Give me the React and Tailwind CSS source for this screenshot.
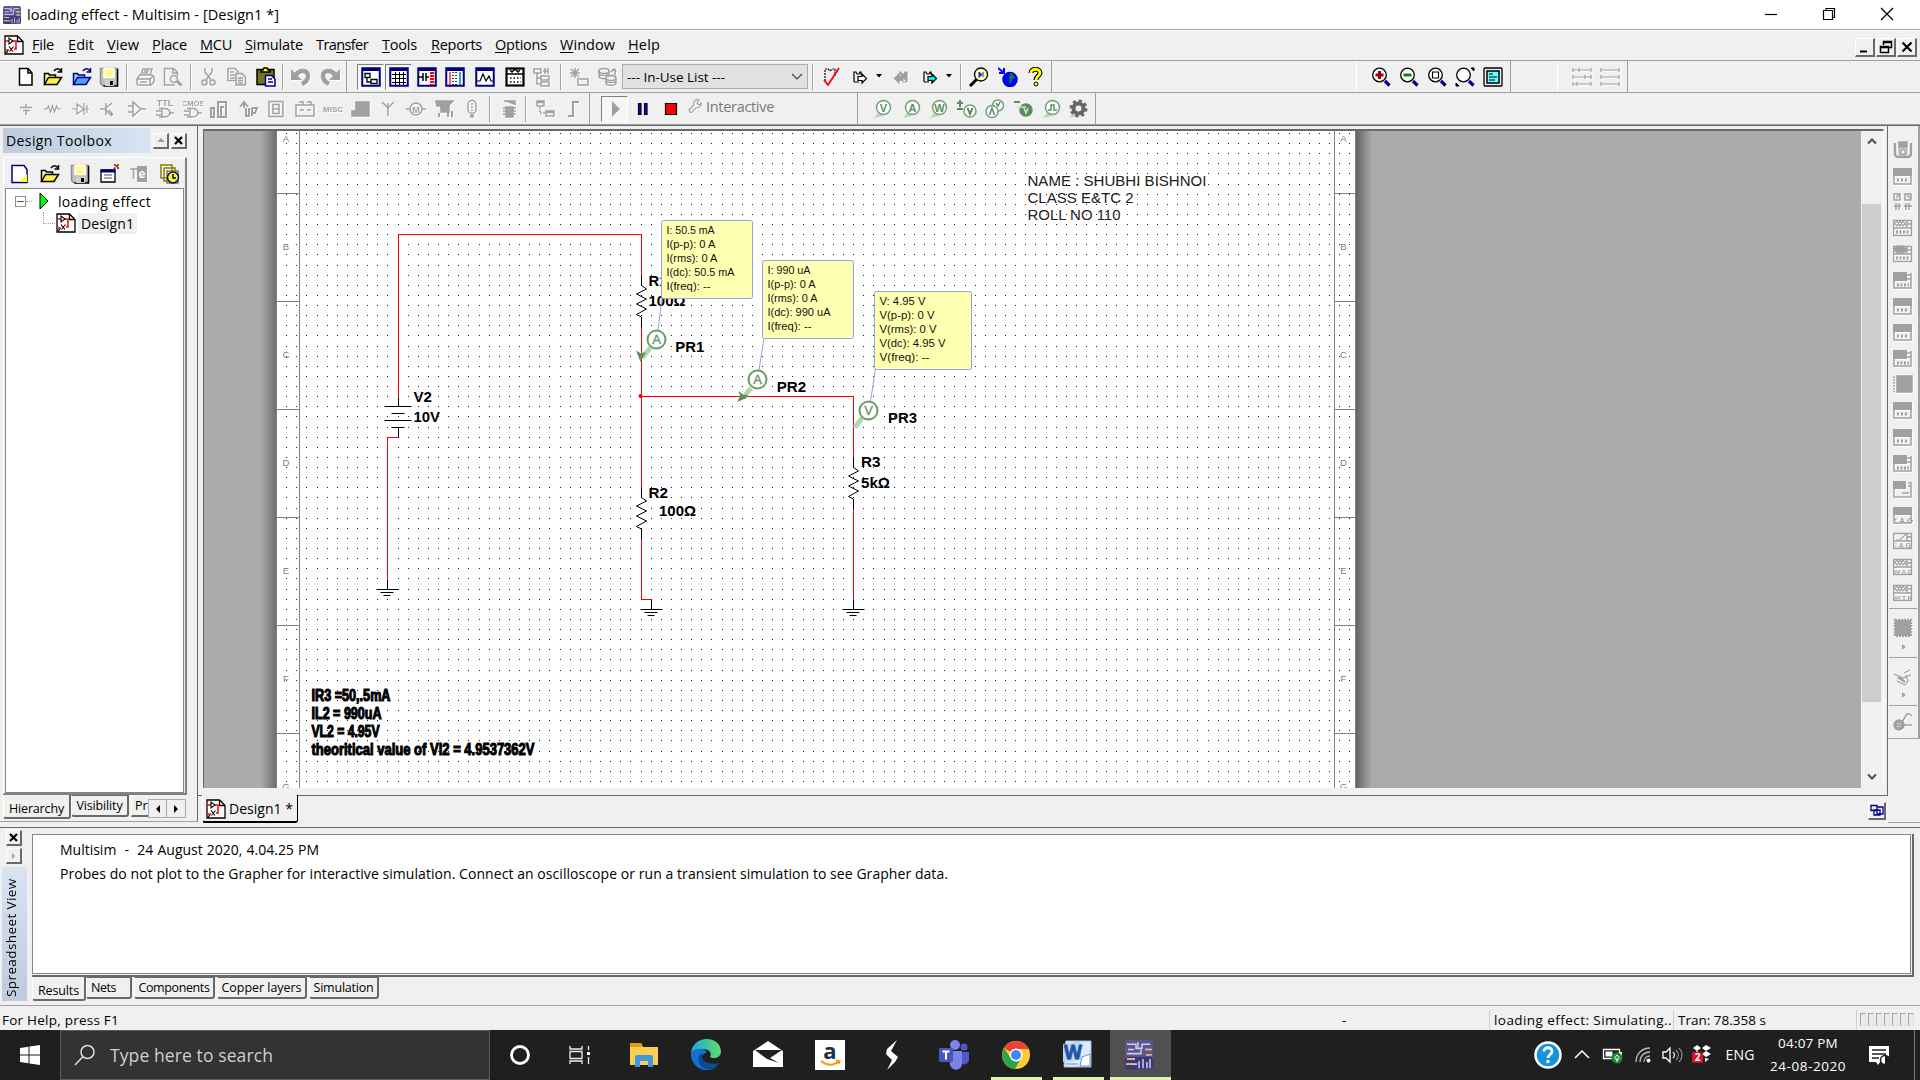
import React, { useLayoutEffect, useRef, useState } from "react";

const UI = "font-['Open_Sans','Noto_Sans',sans-serif]";

/* Single-line label whose tracking is fitted to a given width. */
function Label({ w, className = "", children }) {
  const ref = useRef(null);
  const [ls, setLs] = useState(0);
  useLayoutEffect(() => {
    const el = ref.current;
    const n = el.textContent.length;
    if (w && n > 1) setLs((w - el.getBoundingClientRect().width) / n);
  }, [w]);
  return (
    <span ref={ref} className={"inline-block whitespace-pre " + className} style={{ letterSpacing: ls }}>
      {children}
    </span>
  );
}

/* Flex row whose items are centred on given x values. */
function Strip({ start = 0, items, className = "" }) {
  let end = start;
  return (
    <div className={"flex items-center " + className}>
      {items.map(([c, w, el], i) => {
        const ml = c - w / 2 - end;
        end = c + w / 2;
        return (
          <div key={i} className="flex shrink-0 justify-center" style={{ marginLeft: ml, width: w }}>
            {el}
          </div>
        );
      })}
    </div>
  );
}

const G = "#a0a0a0";
function I({ children, w = 20, h = 20, off }) {
  return (
    <svg
      width={w}
      height={h}
      viewBox={`0 0 ${w} ${h}`}
      fill="none"
      stroke={off ? G : "#000"}
      strokeWidth="1.5"
      className={off ? "block shrink-0 drop-shadow-[1px_1px_0_#fff]" : "block shrink-0"}
    >
      {children}
    </svg>
  );
}
const Sep = () => (
  <div className="flex h-[26px] w-[2px]">
    <div className="w-px bg-[#a0a0a0]" />
    <div className="w-px bg-white" />
  </div>
);
const Pressed = ({ children }) => (
  <div className="flex h-[26px] w-[27px] items-center justify-center border border-white border-t-[#808080] border-l-[#808080] bg-[#f6f6f6]">
    {children}
  </div>
);

/* ---------- icons ---------- */
const NewIc = () => (
  <I>
    <path d="M3.500 1.500h8.500l4 4.500v12h-12.500z" fill="#fff" />
    <path d="M12 1.500v4.500h4" />
  </I>
);
const OpenIc = ({ blue }) => (
  <I>
    <path d="M1.500 17.500V6.500h4l1 1.500h6v3" fill={blue ? "#9cf" : "#fff799"} stroke={blue ? "#000080" : "#000"} />
    <path d="M1.500 17.500l4-7h13l-4.500 7z" fill={blue ? "#4d9eff" : "#fff04a"} stroke={blue ? "#000080" : "#000"} />
    <path d="M11 4c2-3 5-3 7 0M18.500 1v4h-4" stroke={blue ? "#000080" : "#000"} />
  </I>
);
const SaveIc = () => (
  <I>
    <path d="M1.500 1.500h17v17h-15l-2-2z" fill="#c0c0c0" stroke="#909090" />
    <path d="M18.500 2v17h-14" />
    <rect x="5" y="1.500" width="10" height="9" fill="#fff88a" stroke="#fff" />
    <rect x="6" y="13" width="9" height="6" fill="#d0d0d0" stroke="none" />
    <rect x="11" y="14" width="3" height="4" fill="#000" stroke="none" />
  </I>
);
const PrintIc = () => (
  <I off>
    <path d="M6 8l2-6h9l-2 6M2 12l3-4h12l2 2v5l-3 3H3l-1-1zM2 12h13l3-3M15 12v6M5 15h7M9 4h5M8 6h5" />
  </I>
);
const PreviewIc = () => (
  <I off>
    <path d="M12 18H1.500V1.500h9l4 4V9M10 2v4h4M14 14l5 5" />
    <circle cx="11" cy="12" r="3.500" />
    <path d="M14 14l4 4" strokeWidth="3" />
  </I>
);
const CutIc = () => (
  <I off>
    <path d="M6 1v4l6 8M13 1v4l-6 8" />
    <circle cx="5.500" cy="15.500" r="2.500" />
    <circle cx="13.500" cy="15.500" r="2.500" />
  </I>
);
const CopyIc = () => (
  <I off>
    <path d="M1 1.500h7l3 3v9H1zM3 5h4M3 8h5M3 11h5" />
    <path d="M9 6.500h6l3.500 3.500v8H9zM11 11h5M11 13.500h5M11 16h5" fill="#f0f0f0" />
  </I>
);
const PasteIc = () => (
  <I>
    <rect x="1" y="2.500" width="17" height="15" fill="#77751c" />
    <path d="M5 5V3h2c0-3 5-3 5 0h2v2z" fill="#ff0" />
    <path d="M9.500 8.500h6l3.500 3.500v7H9.500zM12 12h4M12 15h5" fill="#fff" stroke="#000080" />
  </I>
);
const UndoIc = ({ flip }) => (
  <I off>
    <g transform={flip ? "translate(20 0) scale(-1 1)" : undefined}>
      <path d="M5 8c3-5 12-6 12 1 0 4-2 6-6 8" strokeWidth="4.500" />
      <path d="M0 2v11h11z" fill={G} stroke="none" />
    </g>
  </I>
);
const Win = ({ children }) => (
  <I>
    <rect x="1.250" y="1.250" width="17.500" height="17.500" fill="#fff" stroke="#000080" strokeWidth="2" />
    <rect x="1" y="1" width="18" height="3" fill="#000080" stroke="none" />
    {children}
  </I>
);
const HierIc = () => (
  <I off>
    <path d="M1 2h7v4H1zM8 9h8v4H8zM8 15h8v4H8zM4 6v11h4M4 11h4M10 4h5M12 1v6M15 1v6" />
  </I>
);
const CalcIc = () => (
  <I>
    <rect x="1.500" y="1.500" width="17" height="17" fill="#fff" strokeWidth="2.200" />
    <path d="M2 7h16M5 3l2 2 3-3 3 3 2-2" />
    <path d="M5 11h11M5 15h11" strokeDasharray="1.500 2" />
  </I>
);
const StarIc = () => (
  <I off>
    <path d="M6 1v10M1 6h10M2 2l8 8M10 2l-8 8M9 12h10v6H9z" />
  </I>
);
const DbIc = () => (
  <I off>
    <ellipse cx="6" cy="4" rx="5" ry="2.500" />
    <path d="M1 4v5c0 3 6 3 8 2M1 7c0 2 8 2 10 0V4M13 5l3-3 2 3M17 2v6" />
    <ellipse cx="13" cy="11" rx="5" ry="2.500" fill="#f0f0f0" />
    <path d="M8 11v5c0 3 10 3 10 0v-5M8 14c0 2 10 2 10 0" />
  </I>
);
const ErcIc = () => (
  <I>
    <path d="M4 14V2h3l2 2 2-2h3v7" strokeDasharray="2 1" strokeWidth="1.200" />
    <path d="M3 13l4 5L18 1" stroke="#f00" strokeWidth="1.800" />
  </I>
);
const XferIc = ({ back, cyan }) => (
  <I w={16} h={16} off={back}>
    <g transform={back ? "translate(16 0) scale(-1 1)" : undefined} strokeWidth="1.200">
      <path d="M2 13V3h2l1 2h2l1-2h1v3M2 13h5" fill={back ? G : "none"} />
      <path d="M6 7.500h4V5l4.500 4.500L10 14v-2.500H6z" fill={back ? G : cyan ? "#0ee" : "#fff"} />
    </g>
  </I>
);
const Tri = () => <I w={7} h={5}><path d="M0 0h6L3 3.500z" fill="#000" stroke="none" /></I>;
const FindIc = () => (
  <I>
    <path d="M8 12l-7 7" strokeWidth="3" />
    <circle cx="12" cy="7.500" r="6.500" fill="#ffffb0" strokeWidth="1.300" />
    <path d="M10 5l3 2.500-3 3z M14 5v5" fill="#22c" stroke="#22c" strokeWidth="1" />
  </I>
);
const GlobeIc = () => (
  <I>
    <circle cx="12" cy="12.500" r="7" fill="#00f" stroke="#00c" />
    <path d="M12 6c4 0 3 3 5 4-1 3-4 1-3 4l-2 3c-2-3 1-4-1-6z" fill="#087a4a" stroke="none" />
    <path d="M0 1l6 5M6 1v5H1" stroke="#00f" strokeWidth="2" />
  </I>
);
const HelpIc = () => (
  <I w={16}>
    <path d="M4 6c0-5 9-5 9 0 0 3-4 3-4 7" strokeWidth="5" />
    <path d="M4 6c0-5 9-5 9 0 0 3-4 3-4 7" stroke="#ff0" strokeWidth="2.800" />
    <circle cx="9" cy="17" r="2" fill="#ff0" strokeWidth="1" />
  </I>
);
const DesIc = () => (
  <I>
    <path d="M1 1h12.500L19 6.500V19H1z" fill="#fff" strokeWidth="1.300" />
    <path d="M13.500 1v5.500H19" strokeWidth="1.300" />
    <path d="M1 6h4M8 6h4v8h-2M1 15h4" stroke="#f00" strokeWidth="1.500" />
    <path d="M5 3v6l4-3zM5 11.500l4 5M9.500 11.500l-4 5M2 18l2-2" strokeWidth="1.100" />
  </I>
);
const Mag = ({ children }) => (
  <I>
    <circle cx="8.500" cy="8" r="6.800" fill="#fff" strokeWidth="1.300" />
    <path d="M14 14l4.500 4.500" stroke="#00009c" strokeWidth="3.200" />
    {children}
  </I>
);
const Txt = ({ t, y = 8, s = 8, x = 10 }) => (
  <text x={x} y={y} fontSize={s} textAnchor="middle" fill={G} stroke="none" fontWeight="bold" fontFamily="Liberation Sans, sans-serif">
    {t}
  </text>
);

const parts = [
  [26, <I off><path d="M4 8.500h12M7 11.500h7M10 5v3M10 12v4" /></I>],
  [53, <I off><path d="M1 10h3l1.500-3 2 6 2-6 2 6 2-6 1.500 3H18" strokeWidth="1.200" /></I>],
  [81, <I off><path d="M1 10h5M6 5v10l7-5zM13 4v12M13 10h5M16 6v8" strokeWidth="1.200" /></I>],
  [108, <I off><path d="M2 10h6M8 4v12M8 9l6-5M8 11l6 6M11 11l4 5" /></I>],
  [137, <I off><path d="M1 7h5M1 13h5M6 3v14l8-7zM14 10h5" /></I>],
  [165, <I off><Txt t="TTL" y={7} s={9} /><path d="M4 9.500h5c8 0 8 8.500 0 8.500H4M7 10v8M14 14h5M1 12h5M1 16h5" /></I>],
  [193, <I off><Txt t="CMOS" y={7} s={7.5} /><path d="M4 9.500h5c8 0 8 8.500 0 8.500H4M7 10v8M14 14h5M1 12h5M1 16h5" /></I>],
  [220, <I off><path d="M4 18V9H1v9zM8 18V3h8v15zM11 18V8h3" strokeWidth="2" /></I>],
  [249, <I off><path d="M1 8l4-5 4 5M5 3v6M7 9v8h3V9M13 9v8M13 9h5l-2 5h-3" strokeWidth="2" /></I>],
  [276, <I off><path d="M3 2.500h14v15H3zM7 5.500h6v9H7zM7 10h6" /></I>],
  [305, <I off><path d="M1 6h18v11H1zM4 3h4v3M12 3h4v3M5 11h4M12 11h4" /></I>],
  [333, <I off><Txt t="MISC" y={12.500} s={8} /></I>],
  [361, <I off><path d="M5 3h13v11H5zM1 12h17v5H1z" fill={G} /></I>],
  [388, <I off><path d="M4 3l6 6 6-6M10 4v13" /></I>],
  [416, <I off><path d="M0 10h4M16 10h4" /><circle cx="10" cy="10" r="6" /><Txt t="M" y={13.500} s={9} /></I>],
  [445, <I off><path d="M1 2h17l-4 4v7H6V7H2z" fill={G} /><path d="M4 18v-4M13 18v-7M17 18v-6" strokeWidth="2" /></I>],
  [472, <I off><rect x="6" y="1.500" width="8" height="13" rx="4" /><path d="M10 4v9" strokeDasharray="2 1" /><path d="M8 17h4" strokeWidth="3" /></I>],
  [490, <Sep />, 2],
  [509, <I off><path d="M5 2h11v4M7 8h7v10H7z" fill={G} /><path d="M4 9h13M4 12h13M4 15h13" /></I>],
  [526, <Sep />, 2],
  [545, <I off><path d="M2 2h7v5H2zM2 3.500h7M11 12h8v5h-8zM11 13.500h8" /><path d="M5 8v6h5" strokeDasharray="2 1" /></I>],
  [573, <I off><path d="M5 17h5V3h6" strokeWidth="2" /></I>],
].map(([c, e, w]) => [c, w || 20, e]);

const Probe = ({ t }) => (
  <I>
    <path d="M1 19l5-6 4 4z" fill="#b5d8b0" stroke="none" />
    <circle cx="10.500" cy="8.500" r="7" fill="#fff" stroke="#74a077" />
    <text x="10.500" y="12.500" fontSize="11" textAnchor="middle" fill="#5b8c60" stroke="none" fontWeight="bold" fontFamily="Liberation Sans, sans-serif">
      {t}
    </text>
  </I>
);

/* ---------- instrument icons ---------- */
const instKinds = "abcdefghijklmnopqr".split("");
function Instrument({ k }) {
  const full = "bghklo".includes(k);
  const wave = "depqr".includes(k);
  return (
    <I off w={20} h={18}>
      {k === "a" && <><path d="M2 2v12l2 2h12l2-2V2" strokeWidth="2.500" /><path d="M6 1h8v5H6z" fill={G} /><path d="M6 7h8v7H6z" strokeWidth="1" /><circle cx="10" cy="11" r="2.500" /></>}
      {k === "c" && <path d="M1 1h6v6H1zM12 1h6v6h-6zM3 5l3-3M14 2l3 3M1 13h7M11 13h8M3 10v7M6 10v7M13 10v7M16 10v7" />}
      {full && <><path d="M0 1h19v8H0z" fill={G} stroke="none" /><path d="M1 1v16h17V9" /></>}
      {full && k !== "o" && <path d="M4 13h12" strokeWidth="3" strokeDasharray="2 2" />}
      {wave && <><path d="M.5 1.500h18v15H.5zM1 9h18M14 1v8M14 5h5" /><path d={k === "p" ? "M3 8h4l6-6" : "M1 6l3-4 3 5 3-5 3 5M1 3l3 4 3-5 3 5 3-4"} strokeWidth={k === "e" ? 2.8 : 1.2} /></>}
      {"de".includes(k) && <path d="M3 13h13" strokeDasharray="2 1.500" strokeWidth="3" />}
      {k === "o" && <Txt t="† A G" y={16.5} s={8} />}
      {k === "p" && <Txt t="⁝ A G" y={16} s={7} />}
      {k === "q" && <Txt t="## A G" y={15.5} s={6} />}
      {k === "r" && <Txt t="## T K" y={15.5} s={6} />}
      {"fim".includes(k) && <><path d="M0 1h14v9H0z" fill={G} stroke="none" /><path d="M1 1v16h17V2M14 4h4M14 8h4" /><path d="M4 14h12" strokeWidth="3" strokeDasharray="2 1.500" /></>}
      {k === "j" && <><path d="M4 1h15v16H4z" fill={G} /><path d="M1 1v16" strokeDasharray="2 1" /></>}
      {k === "n" && <><path d="M0 1h13v8H0z" fill={G} stroke="none" /><path d="M1 9v8h17V2M15 3h3M15 6h3M9 13h7" /></>}
    </I>
  );
}

/* ---------- schematic ---------- */
const BF = "Liberation Sans, Arial, sans-serif";
const Res = ({ x, y }) => (
  <path d={`M${x} ${y - 10}v10l5 3.500-10 5 10 5-10 5 10 5-10 5.500 5 2.500v10`} stroke="#000" fill="none" />
);
const Gnd = ({ x, y }) => <path d={`M${x} ${y - 10}v10M${x - 11} ${y}h22M${x - 7} ${y + 3}h13M${x - 4} ${y + 6}h7`} stroke="#000" fill="none" />;
const B = ({ x, y, w, children }) => (
  <text x={x} y={y} fontSize="15" fontWeight="bold" textLength={w} lengthAdjust="spacingAndGlyphs" fontFamily={BF}>
    {children}
  </text>
);
const Head = ({ x, y, t }) => (
  <g>
    <circle cx={x} cy={y} r="9" fill="#fff" stroke="#6b9a6e" strokeWidth="2" />
    <text x={x} y={y + 4.5} fontSize="13" textAnchor="middle" fill="#6b9a6e" stroke="#6b9a6e" strokeWidth=".4" fontFamily={BF}>
      {t}
    </text>
  </g>
);
const Note = ({ x, y, w, lines }) => (
  <g>
    <rect x={x} y={y} width={w} height="78" rx="2" fill="#ffffb2" stroke="#8fa5e0" />
    {lines.map(([t, l], i) => (
      <text key={i} x={x + 5} y={y + 13.5 + i * 14} fontSize="11.500" textLength={l} lengthAdjust="spacingAndGlyphs" fontFamily={BF} fill="#111">
        {t}
      </text>
    ))}
  </g>
);

function Schematic() {
  const L = ["A", "B", "C", "D", "E", "F", "G"];
  const steps = [0, 10, 20, 30, 40, 50, 60, 70];
  return (
    <svg width="1657" height="657" viewBox="204 131 1657 657" className="block shrink-0">
      <defs>
        <pattern id="dots" x="317" y="184" width="81" height="81" patternUnits="userSpaceOnUse">
          {steps.map((a) => steps.map((b) => <rect key={a + "-" + b} x={a} y={b} width="1" height="1" fill="#202020" />))}
        </pattern>
        <linearGradient id="sl"><stop offset="0" stopColor="#ababab" /><stop offset="1" stopColor="#6a6a6a" /></linearGradient>
        <linearGradient id="sr"><stop offset="0" stopColor="#606060" /><stop offset="1" stopColor="#ababab" /></linearGradient>
      </defs>
      <rect x="204" y="131" width="1657" height="657" fill="#ababab" />
      <rect x="261" y="131" width="16" height="657" fill="url(#sl)" />
      <rect x="1355" y="131" width="17" height="657" fill="url(#sr)" />
      <rect x="277" y="131" width="1079" height="657" fill="#fff" />
      <rect x="280" y="131" width="1072" height="657" fill="url(#dots)" />
      <g fill="#808080">
        <rect x="276" y="131" width="1" height="657" />
        <rect x="299" y="131" width="1" height="657" />
        <rect x="1334" y="131" width="1" height="657" />
        <rect x="1355" y="131" width="1" height="657" />
        {[193, 301, 409, 517, 625, 733].map((y) => (
          <g key={y}>
            <rect x="277" y={y} width="22" height="1" />
            <rect x="1335" y={y} width="20" height="1" />
          </g>
        ))}
      </g>
      <g fontFamily={BF} fontSize="9.500" fill="#808080" textAnchor="middle">
        {L.map((c, i) => (
          <g key={c}>
            <text x="286" y={142 + i * 108}>{c}</text>
            <text x="1343.500" y={142 + i * 108}>{c}</text>
          </g>
        ))}
      </g>
      <g transform="translate(.5 .5)">
        <g stroke="#f00" fill="none">
          <path d="M398 397V234H641V275M398 437H387V578M641 325V487M641 396H853V457M641 538V599H651M853 507V600" />
          <circle cx="640" cy="395.500" r="2" fill="#f00" stroke="none" />
        </g>
        <path d="M398 397v9M384 406h27M391 413h13M384 420h27M391 427h13M398 427v10" stroke="#000" fill="none" />
        <Res x={641} y={285} />
        <Res x={641} y={497} />
        <Res x={853} y={467} />
        <Gnd x={387} y={589} />
        <Gnd x={651} y={609} />
        <Gnd x={853} y={609} />
      </g>
      <B x={413.5} y={402} w={18.5}>V2</B>
      <B x={413.5} y={422} w={26.5}>10V</B>
      <B x={648.5} y={285.500} w={19}>R1</B>
      <B x={648.5} y={305.500} w={37}>100Ω</B>
      <B x={648.5} y={498} w={19.5}>R2</B>
      <B x={659} y={516} w={37}>100Ω</B>
      <B x={861} y={467} w={19.5}>R3</B>
      <B x={861} y={487.5} w={29}>5kΩ</B>
      <B x={675.2} y={351.7} w={29}>PR1</B>
      <B x={776.7} y={391.7} w={29.5}>PR2</B>
      <B x={888} y={422.5} w={29}>PR3</B>
      <path d="M662 298l-4 32M764 338l-5 32M875.500 369l-5 32" fill="none" stroke="#8fa5e0" />
      <path d="M650.500 347.500L642 358M751 388l-8 10M862 418l-7 9.500" stroke="#b2d9ae" strokeWidth="5" fill="none" />
      <path d="M636 350.500l5 3 5-1.500-5.500 10zM738.500 391l5 4 4-.5-1 3.500-9.500 4 3-6z" fill="#5c8f62" />
      <Head x={656.500} y={339.500} t="A" />
      <Head x={757.500} y={379.500} t="A" />
      <Head x={868.500} y={410.500} t="V" />
      <Note x={661.500} y={220.500} w={91} lines={[["I: 50.5 mA", 48], ["I(p-p): 0 A", 49], ["I(rms): 0 A", 51], ["I(dc): 50.5 mA", 68], ["I(freq): --", 44]]} />
      <Note x={762.500} y={260.500} w={91} lines={[["I: 990 uA", 43], ["I(p-p): 0 A", 48], ["I(rms): 0 A", 50], ["I(dc): 990 uA", 63], ["I(freq): --", 44]]} />
      <Note x={874.500} y={291.500} w={97} lines={[["V: 4.95 V", 46], ["V(p-p): 0 V", 55], ["V(rms): 0 V", 57], ["V(dc): 4.95 V", 66], ["V(freq): --", 50]]} />
      <g fontFamily={BF} fontSize="15.500" fill="#222">
        <text x="1027.500" y="186" textLength="179" lengthAdjust="spacingAndGlyphs">NAME : SHUBHI BISHNOI</text>
        <text x="1027.500" y="203" textLength="106" lengthAdjust="spacingAndGlyphs">CLASS E&amp;TC 2</text>
        <text x="1027.500" y="220" textLength="93" lengthAdjust="spacingAndGlyphs">ROLL NO 110</text>
      </g>
      <g fontFamily="Liberation Sans Narrow, Liberation Sans, sans-serif" fontSize="16" fontWeight="bold" stroke="#000" strokeWidth="1.100">
        <text x="311.500" y="701" textLength="79" lengthAdjust="spacingAndGlyphs">IR3 =50,.5mA</text>
        <text x="311.500" y="719" textLength="70" lengthAdjust="spacingAndGlyphs">IL2 = 990uA</text>
        <text x="311.500" y="736.500" textLength="68" lengthAdjust="spacingAndGlyphs">VL2 = 4.95V</text>
        <text x="311.500" y="754.500" textLength="223" lengthAdjust="spacingAndGlyphs">theoritical value of VI2 = 4.9537362V</text>
      </g>
    </svg>
  );
}

/* ---------- chrome ---------- */
const Btn3 = ({ children, className = "" }) => (
  <div className={"flex shrink-0 items-center justify-center border-t border-l border-r-2 border-b-2 border-t-white border-l-white border-r-[#696969] border-b-[#696969] bg-[#f0f0f0] " + className}>
    {children}
  </div>
);

const Chip = ({ s, big }) => (
  <svg width={s} height={big ? s * 1.05 : s} viewBox="0 0 28 28" preserveAspectRatio="none" className="block shrink-0">
    <rect width="28" height="28" rx="3" fill="#5b568f" />
    <rect y="16" width="28" height="12" rx="3" fill="#3d3875" />
    <path d="M2 4h9v4h6V4h8M2 13h14V9M3 9h6M13 2v5M20 9h6M21 14h5M2 18h8M2 23h10M14 27v-7M18 27v-9M22 27v-6M25 27v-9" stroke="#d0cdea" strokeWidth="1.500" fill="none" />
    <path d="M20 9h7M2 18h7M21 14h6M1 23h8" stroke="#e8b36c" strokeWidth="1.500" />
  </svg>
);

function TitleBar() {
  return (
    <div className="flex h-[29px] items-center bg-white pl-[3px]">
      <Chip s={18} />
      <Label w={252} className="ml-[6px] text-[14.500px]">loading effect - Multisim - [Design1 *]</Label>
      <div className="mb-px ml-auto flex items-center gap-[44px] pr-[26px]">
        <I w={14} h={14}><path d="M1 7.500h12" strokeWidth="1.200" /></I>
        <I w={14} h={14}><path d="M1.500 3.500h9v9h-9zM4 3.500v-2h8.500v9h-2" strokeWidth="1.200" /></I>
        <I w={14} h={14}><path d="M1 1l12 12M13 1L1 13" strokeWidth="1.200" /></I>
      </div>
    </div>
  );
}

const menus = [
  ["", "F", "ile", 32, 22], ["", "E", "dit", 68, 26], ["", "V", "iew", 107, 32], ["", "P", "lace", 152, 35], ["", "M", "CU", 200, 32], ["", "S", "imulate", 245, 58],
  ["Tra", "n", "sfer", 316, 52], ["", "T", "ools", 382, 35], ["", "R", "eports", 431, 51], ["", "O", "ptions", 495, 52], ["", "W", "indow", 560, 55], ["", "H", "elp", 628, 32],
];

function MenuBar() {
  return (
    <div className="flex h-[31px] items-center border-t border-[#a0a0a0] pr-[3px] pl-[3px] shadow-[inset_0_1px_0_#fff]">
      <Strip
        start={3}
        items={[[14, 20, <DesIc />], ...menus.map(([a, u, b, x, w]) => [x + w / 2, w, <Label w={w} className="shrink-0 text-[14.500px] leading-5">{a}<span className="underline decoration-1 underline-offset-2">{u}</span>{b}</Label>])]}
      />
      <div className="mt-[5px] ml-auto flex gap-[1px]">
        <Btn3 className="h-[19px] w-5"><I w={12} h={12}><path d="M1 10.500h7" strokeWidth="2" /></I></Btn3>
        <Btn3 className="h-[19px] w-5"><I w={14} h={14}><path d="M4.500 5V1.500h8v6H10M4.500 2.500h8M1.500 6.500h8v6h-8zM1.500 7.500h8" /></I></Btn3>
        <Btn3 className="h-[19px] w-5"><I w={12} h={12}><path d="M1.500 1.500l9 9M10.500 1.500l-9 9" strokeWidth="2.200" /></I></Btn3>
      </div>
    </div>
  );
}

function Toolbar1() {
  const items = [
    [25.5, 20, <NewIc />], [53, 20, <OpenIc />], [82, 20, <OpenIc blue />], [109, 20, <SaveIc />], [127, 2, <Sep />],
    [145, 20, <PrintIc />], [173, 20, <PreviewIc />], [191, 2, <Sep />], [209, 20, <CutIc />], [237, 20, <CopyIc />], [266, 20, <PasteIc />], [283, 2, <Sep />],
    [301, 20, <UndoIc />], [330, 20, <UndoIc flip />], [346, 2, <div className="h-[31px] w-px bg-[#a0a0a0]" />],
    [370.5, 27, <Pressed><Win><path d="M4 6.500h5v4H4zM10 12.500h6v4h-6zM6 11v4h4" strokeWidth="1.300" /></Win></Pressed>],
    [398.5, 27, <Pressed><Win><path d="M3 7.500h14M3 11.500h14M3 15.500h14M6.500 5v13M10.500 5v13M14.500 5v13" strokeWidth="1" /></Win></Pressed>],
    [427, 20, <Win><path d="M2 10h4M6 6v8M9 6v8M9 10h3" /><path d="M15 5v13" stroke="#f00" strokeWidth="4" strokeDasharray="2 1" /></Win>],
    [455, 20, <Win><path d="M5 5v13" stroke="#e33" /><path d="M8 5v13M11 5v13" strokeDasharray="1 2" /><path d="M15 5v13" stroke="#088" /></Win>],
    [485, 20, <Win><path d="M2 14h3l3-7 3 7 3-5 2 5h2" strokeWidth="1.200" /></Win>],
    [515, 20, <CalcIc />], [543, 20, <HierIc />], [561, 2, <Sep />], [579, 20, <StarIc />], [608, 20, <DbIc />],
    [715, 186,
      <div className="flex h-[25px] w-[186px] items-center border border-[#adadad] bg-[#e1e1e1] px-1">
        <Label w={98} className="mt-px text-[13.500px]">--- In-Use List ---</Label>
        <div className="ml-auto"><I w={12} h={8}><path d="M1 1l5 5 5-5" stroke="#444" strokeWidth="1.200" /></I></div>
      </div>],
    [813, 2, <Sep />], [831, 20, <ErcIc />], [860, 16, <XferIc />], [879, 7, <Tri />], [901, 16, <XferIc back />], [930, 16, <XferIc cyan />], [949, 7, <Tri />],
    [961, 2, <Sep />], [979, 20, <FindIc />], [1008, 20, <GlobeIc />], [1035, 16, <HelpIc />],
  ];
  return (
    <div className="flex h-[32px] border-t border-[#a0a0a0]">
      <Strip items={items} className="h-[31px] w-[1052px] border-r border-[#a0a0a0] shadow-[inset_0_1px_0_#fff]" />
      <Strip
        start={1356}
        className="ml-[304px] h-[32px] w-[155px] border-r border-b border-l border-[#a0a0a0] border-l-white"
        items={[
          [1380, 20, <Mag><path d="M4.500 8h8M8.500 4v8" stroke="#900" strokeWidth="3" /></Mag>],
          [1408, 20, <Mag><path d="M4.500 8h8" stroke="#080" strokeWidth="3" /></Mag>],
          [1436, 20, <Mag><path d="M5.500 5h6v6h-6z" strokeWidth="1.200" /></Mag>],
          [1464, 20, <Mag><path d="M16 1h3v3zM1 16v3h3z" fill="#000" strokeWidth="1" /></Mag>],
          [1492, 20, <I><rect x="1" y="1" width="18" height="18" rx="1" fill="#eee" strokeWidth="1.300" /><rect x="4" y="4" width="12" height="12" fill="#6ff" strokeWidth="1.500" /><path d="M6 7h4M6 10h8M6 13h6" strokeWidth="1.200" /></I>],
        ]}
      />
      <Strip
        start={1557}
        className="ml-[46px] h-[32px] w-[71px] border-r border-b border-l border-[#a0a0a0] border-l-white"
        items={[
          [1581, 20, <I off><path d="M1 3h18M1 10h18M1 17h18M1 1v4M19 1v4M1 8v4M19 8v4M1 15v4M19 15v4M7 1v4M13 8v4M5 15v4" strokeWidth="1.200" /></I>],
          [1609, 20, <I off><path d="M1 3h18M1 10h18M1 17h18M1 1v4M19 1v4M1 8v4M19 8v4M1 15v4M19 15v4" strokeWidth="1.200" /></I>],
        ]}
      />
    </div>
  );
}

function Toolbar2() {
  const right = [
    [614, 27, <Pressed><div className="pl-[3px]"><I w={14} h={16} off><path d="M3 0v16l8-8z" fill={G} stroke="none" /></I></div></Pressed>],
    [643, 12, <I w={12} h={14}><path d="M1.500 1.500h2.500v11H1.500zM7.500 1.500H10v11H7.500z" fill="#00f" strokeWidth="1.200" /></I>],
    [671, 14, <I w={14} h={14}><path d="M1.500 1.500h11v11h-11z" fill="#f00" strokeWidth="1.200" /></I>],
    [695, 14, <div className="mb-[5px]"><I w={14} h={14} off><path d="M2 13l-1-2 5-5c-1-4 2-6 5-5l-2 3 2 2 2-2c1 3-2 5-5 5l-5 5z" strokeWidth="1.200" /></I></div>],
    [740, 68, <Label w={68} className="-mt-[4px] text-[14.500px] text-[#7a7a7a]">Interactive</Label>],
    [857, 1, <div className="h-[31px] w-px bg-[#a0a0a0]" />],
    [883, 20, <Probe t="V" />], [912, 20, <Probe t="A" />], [939, 20, <Probe t="W" />],
    [967, 20, <I><path d="M3 1v7M0 4h6M0 10h6" stroke="#5b8c60" strokeWidth="2" /><circle cx="13" cy="12" r="6" fill="#fff" stroke="#74a077" /><path d="M10.500 9l2.500 6 2.500-6" stroke="#5b8c60" strokeWidth="2" /></I>],
    [995, 20, <I><circle cx="13" cy="6.500" r="5.500" fill="#fff" stroke="#74a077" /><circle cx="7" cy="12.500" r="6" fill="#fff" stroke="#74a077" /><path d="M4.500 16L7 9l2.500 7M11 4l2 3 2-4" stroke="#5b8c60" /></I>],
    [1024, 20, <I><path d="M0 3h6" stroke="#5b8c60" strokeWidth="2" /><circle cx="12" cy="11" r="6" fill="#5b8c60" stroke="#5b8c60" /><path d="M2 8h10M10 9l2 5 2-5" stroke="#cfe6cc" /></I>],
    [1052, 20, <I><path d="M1 19l5-6 4 4z" fill="#b5d8b0" stroke="none" /><circle cx="10.500" cy="8.500" r="7" fill="#fff" stroke="#74a077" /><path d="M6 11h3V6h3v5h3" stroke="#5b8c60" /></I>],
    [1078, 20, <I><path d="M1 19l5-6 4 4z" fill="#b5d8b0" stroke="none" /><circle cx="10.500" cy="9.500" r="5" stroke="#666" strokeWidth="4" /><circle cx="10.500" cy="9.500" r="7.500" stroke="#666" strokeWidth="3" strokeDasharray="3 2.890" /></I>],
  ];
  return (
    <div className="flex h-[32px] border-t border-[#a0a0a0]">
      <Strip items={parts} className="h-[31px] w-[590px] border-r border-[#a0a0a0]" />
      <Strip start={590} items={right} className="h-[31px] w-[506px] border-r border-[#a0a0a0]" />
    </div>
  );
}

function Tab({ active, w, h, tw, left, children }) {
  return (
    <div
      className={
        "flex shrink-0 items-center rounded-b-[3px] border-r-2 border-b-2 border-l border-[#696969] border-l-white " +
        (active ? "pt-[5px] " : "border-t border-t-[#696969] pt-px ") +
        (left ? "pl-[4px]" : "justify-center")
      }
      style={{ width: w, height: h }}
    >
      <Label w={tw} className="shrink-0 text-[12.500px] leading-4">{children}</Label>
    </div>
  );
}

function Toolbox() {
  return (
    <div className="flex h-[696px] w-[198px] shrink-0 flex-col border-r border-b border-[#696969] border-b-[#a0a0a0] pl-[3px]">
      <div className="mt-[2px] flex h-[25px] items-center">
        <div className="flex h-[25px] w-[147px] items-center bg-linear-to-r from-[#bccbdd] to-[#d8e4f2] pb-px pl-[3px]">
          <Label w={106} className="text-[14px]">Design Toolbox</Label>
        </div>
        <Btn3 className="ml-[3px] h-[16px] w-[16px]"><I w={8} h={4}><path d="M0 4l4-4 4 4z" fill={G} stroke="none" /></I></Btn3>
        <Btn3 className="ml-[2px] h-[16px] w-[16px]"><I w={9} h={9}><path d="M1 1l7 7M8 1L1 8" strokeWidth="2.200" /></I></Btn3>
      </div>
      <div className="mt-[4px] flex h-[638px] w-[184px] flex-col border-t border-r-2 border-b-2 border-l border-[#808080] border-t-white border-l-white">
        <Strip
          start={4}
          className="h-[30px] pt-px"
          items={[
            [19.5, 20, <I><path d="M2 1.500h12l3 4v13H2z" fill="#fff" stroke="#000080" strokeWidth="1.500" /><path d="M17 10v8H9z" fill="#ff3" stroke="none" /></I>],
            [50, 20, <OpenIc />], [80, 20, <SaveIc />],
            [110, 20, <I><path d="M1 6h14v12H1z" fill="#fff" strokeWidth="1.300" /><path d="M1 6h14v2H1z" stroke="#000080" fill="#000080" strokeWidth="1" /><path d="M4 11h8M4 14h8" stroke="#888" /><path d="M14 5l4-4M14 1h4v4" stroke="#900" strokeDasharray="2 1" /></I>],
            [139, 20, <I off><path d="M1 5h7M4.500 5v10" strokeWidth="1.500" /><rect x="8" y="2" width="10" height="16" fill={G} stroke="none" /><text x="13" y="14" fontSize="12" textAnchor="middle" fill="#fff" stroke="none" fontWeight="bold">e</text></I>],
            [170, 20, <I><path d="M1 1h11v13H1zM4 4h11v13H4z" fill="#fff" stroke="#808000" /><path d="M7 7h11v12H7z" fill="#fff" stroke="#808000" /><circle cx="13" cy="13.500" r="5.500" fill="#ff0" stroke="#00c" /><path d="M13 10v4h3" /></I>],
          ]}
        />
        <div className="mx-px flex flex-1 flex-col border border-[#828790] bg-white pt-px pl-[9px]">
          <div className="flex h-[22px] items-center">
            <div className="flex h-[11px] w-[11px] items-center justify-center border border-[#919191]"><div className="h-px w-[7px] bg-[#3c57a5]" /></div>
            <div className="w-[6px] border-t border-dotted border-[#a0a0a0]" />
            <div className="ml-[7px]"><I w={10} h={18}><path d="M1 1v16l8-8z" fill="#0f0" strokeWidth="1" /></I></div>
            <Label w={93} className="ml-[9px] text-[14px]">loading effect</Label>
          </div>
          <div className="flex h-[22px] items-center">
            <div className="mb-[10px] ml-[28px] h-[12px] w-[12px] border-b border-l border-dotted border-[#a0a0a0]" />
            <div className="ml-px"><DesIc /></div>
            <div className="ml-[2px] flex h-[21px] items-center bg-[#f0f0f0] px-[3px]"><Label w={53} className="text-[14px]">Design1</Label></div>
          </div>
        </div>
      </div>
      <div className="flex h-[26px] items-start">
        <Tab active w={68} h={24} tw={55}>Hierarchy</Tab>
        <Tab w={58} h={22} tw={46}>Visibility</Tab>
        <div className="ml-[2px] h-[22px] w-[17px] overflow-hidden border-b-2 border-l border-[#696969] border-l-white pl-[3px] text-[12.500px] leading-[21px]">Pr</div>
        <div className="mt-[4px] flex">
          <div className="flex h-[19px] w-[19px] items-center justify-center border border-[#adadad] bg-[#f0f0f0]"><I w={5} h={8}><path d="M5 0v8L1 4z" fill="#000" stroke="none" /></I></div>
          <div className="flex h-[19px] w-[19px] items-center justify-center border border-l-0 border-[#adadad] bg-[#f0f0f0]"><I w={5} h={8}><path d="M0 0v8l4-4z" fill="#000" stroke="none" /></I></div>
        </div>
      </div>
    </div>
  );
}

function Workspace() {
  return (
    <div className="flex h-[696px] w-[1690px] shrink-0 flex-col">
      <div className="flex h-[670px] flex-col border-r border-b border-[#696969] pt-[3px] pl-[5px]">
        <div className="flex w-[1681px] border-t-2 border-r border-l border-[#696969] border-r-white">
          <Schematic />
          <div className="flex h-[657px] w-[21px] shrink-0 flex-col items-center bg-[#f0f0f0]">
            <div className="flex h-[73px] items-start pt-[6px]"><I w={10} h={8}><path d="M1 6.500l4-4 4 4" stroke="#505050" strokeWidth="2" /></I></div>
            <div className="h-[498px] w-[19px] bg-[#cdcdcd]" />
            <div className="mt-[71px]"><I w={10} h={8}><path d="M1 1.500l4 4 4-4" stroke="#505050" strokeWidth="2" /></I></div>
          </div>
        </div>
      </div>
      <div className="flex h-[26px] items-start pl-[4px]">
        <div className="-mt-px flex h-[28px] w-[96px] items-center rounded-b-[3px] border-r border-b-2 border-l border-black border-l-white bg-[#f0f0f0] pt-px pl-[3px]">
          <DesIc />
          <Label w={64} className="ml-[3px] text-[14px]">Design1 *</Label>
        </div>
        <Btn3 className="mt-[6px] mr-[2px] ml-auto h-[18px] w-[18px]">
          <I w={14} h={13}><path d="M1 1.500h6v5H1zM7 3h6v7H7zM4 6h6v5H4z" fill="#f0f0f0" stroke="#000090" strokeWidth="1.300" /></I>
        </Btn3>
      </div>
    </div>
  );
}

function Instruments() {
  return (
    <div className="flex w-[32px] shrink-0 flex-col">
      <div className="flex h-[613px] flex-col items-center border-r-2 border-b border-[#a0a0a0] pt-[11px]">
        {instKinds.map((k) => (
          <div key={k} className="flex h-[26.050px] shrink-0 items-center"><Instrument k={k} /></div>
        ))}
        <div className="mt-[2px] h-px w-[28px] bg-[#a0a0a0]" />
        <div className="mt-[9px]"><I w={20} h={20} off><path d="M2 2h16v16H2z" fill={G} strokeDasharray="2 1" strokeWidth="2.500" /></I></div>
        <div className="mt-[6px]"><I w={5} h={6} off><path d="M1 0v6l4-3z" fill={G} stroke="none" /></I></div>
        <div className="mt-[7px] h-px w-[28px] bg-[#a0a0a0]" />
        <div className="mt-[11px]"><I w={20} h={18} off><path d="M1 5l9 4 8-3M4 12l8 4 3-4-2-6M11 4l6-3" strokeWidth="1.200" /><path d="M5 8l7 5" strokeWidth="2.500" /></I></div>
        <div className="mt-[5px]"><I w={5} h={6} off><path d="M1 0v6l4-3z" fill={G} stroke="none" /></I></div>
        <div className="mt-[7px] h-px w-[28px] bg-[#a0a0a0]" />
        <div className="mt-[6px]"><I w={20} h={20} off><circle cx="6" cy="13" r="4" strokeWidth="3.500" /><path d="M4 13h15M6 11v4M9 10l5-8h2l3 2" /></I></div>
      </div>
      <div className="mt-[83px] h-px bg-[#a0a0a0]" />
    </div>
  );
}

function Spreadsheet() {
  return (
    <div className="flex h-[179px] border-t border-b border-[#696969] border-b-[#a0a0a0]">
      <div className="flex w-[32px] shrink-0 flex-col pl-[2px]">
        <Btn3 className="mt-[2px] ml-[4px] h-[16px] w-[16px]"><I w={9} h={9}><path d="M1 1l7 7M8 1L1 8" strokeWidth="2.200" /></I></Btn3>
        <Btn3 className="mt-[2px] ml-[4px] h-[16px] w-[16px]"><I w={4} h={6}><path d="M0 0v6l3-3z" fill={G} stroke="none" /></I></Btn3>
        <div className="mt-[3px] flex h-[134px] w-[25px] items-center bg-linear-to-b from-[#d8e4f2] to-[#bccbdd]">
          <div className="-ml-[1px] flex h-[134px] rotate-180 items-center pt-[4px] [writing-mode:vertical-rl]">
            <span className="text-[13.500px] leading-5 tracking-[0.400px] whitespace-nowrap">Spreadsheet View</span>
          </div>
        </div>
      </div>
      <div className="flex min-w-0 flex-1 flex-col pt-[6px]">
        <div className="h-[143px] w-[1882px] border-r-2 border-b-2 border-[#696969]">
          <div className="h-[140px] w-[1879px] border border-[#828790] bg-white pt-[2px] pl-[27px]">
            <div className="flex h-[24px] items-center"><Label w={259} className="text-[14px] [word-spacing:0.5px]">Multisim  -  24 August 2020, 4.04.25 PM</Label></div>
            <div className="flex h-[24px] items-center"><Label w={888} className="text-[14px]">Probes do not plot to the Grapher for interactive simulation. Connect an oscilloscope or run a transient simulation to see Grapher data.</Label></div>
          </div>
        </div>
        <div className="flex items-start">
          <Tab active w={54} h={24} tw={41}>Results</Tab>
          <div className="flex gap-[2px]">
            <Tab left w={46} h={22} tw={25}>Nets</Tab>
            <Tab w={81} h={22} tw={71}>Components</Tab>
            <Tab w={90} h={22} tw={80}>Copper layers</Tab>
            <Tab w={70} h={22} tw={60}>Simulation</Tab>
          </div>
        </div>
      </div>
    </div>
  );
}

function StatusBar() {
  return (
    <div className="flex h-[24px] items-center pt-[3px] pl-[2px] text-[13.500px] leading-5">
      <Label w={117}>For Help, press F1</Label>
      <div className="ml-[1223px] w-[6px]">-</div>
      <div className="ml-[141px] flex h-[20px] w-[184px] items-center overflow-hidden border-l border-[#d0d0d0] pl-[4px]"><Label w={178}>loading effect: Simulating..</Label></div>
      <div className="flex h-[20px] w-[183px] items-center border-l border-[#d0d0d0] pl-[4px]"><Label w={88}>Tran: 78.358 s</Label></div>
      <div className="flex h-[20px] items-center gap-[2px] border-l border-[#d0d0d0] pl-[3px]">
        {[0, 1, 2, 3, 4, 5, 6].map((i) => (
          <div key={i} className="h-[13px] w-[6px] border border-[#e0e0e0] border-t-[#a0a0a0] border-l-[#a0a0a0] bg-[#ececec]" />
        ))}
      </div>
    </div>
  );
}

const TI = ({ children, w = 32 }) => (
  <svg width={w} height="32" viewBox={`0 0 ${w} 32`} fill="none" className="block shrink-0">{children}</svg>
);

function Taskbar() {
  const apps = [
    [520, 32, <TI><circle cx="16" cy="16" r="8.500" stroke="#fff" strokeWidth="2.800" /></TI>],
    [580, 32, <TI><path d="M6 7v3h12V7M6 25v-3h12v3M6 12.500h12v7H6zM24.500 7v4M24.500 18v7" stroke="#eee" strokeWidth="1.300" /><rect x="23" y="13" width="3" height="3" fill="#fff" /></TI>],
    [643.5, 32, <TI><path d="M2 4h11l2 4h15v18H2z" fill="#f9cf51" /><path d="M2 4h11l1 3-1 1H2z" fill="#e0a100" /><path d="M7 28V18a2 2 0 0 1 2-2h14a2 2 0 0 1 2 2v10h-5v-6h-8v6z" fill="#3f98dc" /></TI>],
    [706, 32, <TI><defs><linearGradient id="e1" x1="0" y1="0" x2="1" y2="0"><stop offset="0" stopColor="#1ca8e0" /><stop offset="1" stopColor="#5fdc6a" /></linearGradient></defs>
      <path d="M1 15C2-5 31-4 31 13c0 5-7 8-11 5 2-3 0-8-7-8-6 0-11 2-12 5z" fill="url(#e1)" /><path d="M1 14c3-5 14-6 16 0-6 0-9 9 0 14 4 2 8 1 11-2C20 36 0 31 1 14z" fill="#1470d0" /><path d="M13 13c-4 7 3 14 16 11-3 6-11 8-16 5s-7-12 0-16z" fill="#0c4a94" /></TI>],
    [768, 32, <TI><path d="M1 12L16 2l15 10v16H1z" fill="#fff" /><path d="M3 11h27L18 19l9 5-12-4z" fill="#1f1f1f" /></TI>],
    [830, 32, <TI><rect x="1" y="1" width="30" height="30" fill="#fff" /><text x="16" y="20" fontSize="22" fontWeight="bold" textAnchor="middle" fill="#232f3e" fontFamily="Open Sans, sans-serif">a</text><path d="M7 22c6 5 13 5 18 0M22 21.500l3.500.5-1 3" stroke="#f90" strokeWidth="2" /></TI>],
    [892, 32, <TI><path d="M21 1L11 10l-1 5 6 6-5 10 8-8 3-5-7-6z" fill="#fff" /></TI>],
    [953.5, 32, <TI><circle cx="17" cy="6" r="5" fill="#7b83eb" /><circle cx="26" cy="8" r="3.500" fill="#5059c9" /><path d="M11 12h13v11a6 6 0 0 1-12 3z" fill="#7b83eb" /><path d="M24 13h7v8a5 5 0 0 1-7 4z" fill="#5059c9" /><rect x="1" y="9" width="14" height="14" rx="1" fill="#4b53bc" /><path d="M4.500 12.500h7M8 12.500v8" stroke="#fff" strokeWidth="2" /></TI>],
    [1016, 32, <TI><circle cx="16" cy="16" r="14" fill="#fc3" /><path d="M16 16L4 9a14 14 0 0 1 24.500 1H16z" fill="#ea4335" /><path d="M4 9a14 14 0 0 0 11 21l6-11-5-2-6 1z" fill="#2ba24c" /><circle cx="16" cy="16" r="6.500" fill="#fff" /><circle cx="16" cy="16" r="5" fill="#4285f4" /></TI>],
    [1077, 32, <TI><path d="M5 2h25v26H3l1-22z" fill="#dfeaf8" stroke="#9bb9e4" /><path d="M2 5l18-3v19L2 23z" fill="#bcd5f3" /><text x="12" y="20" fontSize="19" fontWeight="bold" textAnchor="middle" fill="#1e54a8" stroke="#1e54a8" strokeWidth=".8" textLength="18" lengthAdjust="spacingAndGlyphs" fontFamily="Open Sans, sans-serif">W</text><path d="M21 18l8-3v12H19zM5 25h12" fill="#fff" stroke="#6a92cf" /></TI>],
    [1140.5, 61, <div className="flex h-[50px] w-[61px] items-center justify-center bg-[#505050] pr-[3px]"><Chip s={28} big /></div>],
  ];
  const tray = [
    [1548, 30, <TI><circle cx="16" cy="16" r="12.500" fill="#1096db" stroke="#fff" strokeWidth="2.500" /><path d="M12 12.500c0-5 8-5 8 0 0 3-4 3-4 6.500" stroke="#fff" strokeWidth="2.800" /><circle cx="16" cy="22.500" r="1.800" fill="#fff" /></TI>],
    [1582, 20, <I><path d="M3 13l7-7 7 7" stroke="#fff" /></I>],
    [1612.5, 22, <I w={22}><path d="M1.500 4.500h16v9h-16z" stroke="#fff" strokeWidth="1.300" /><path d="M3.500 6.500h7v5h-7zM18 7h2v4h-2z" fill="#fff" stroke="none" /><circle cx="15" cy="13" r="5.500" fill="#168a2c" stroke="none" /><path d="M15 10l2.500 3-2.500 2.500L12.500 13zM15 13v4" stroke="#fff" strokeWidth="1" /></I>],
    [1643, 20, <I><path d="M3 17C3 9 9 3 17 3M7 17c0-6 4-10 10-10M11 17c0-3.500 2.500-6 6-6" stroke="#bbb" strokeWidth="1.300" /><circle cx="15.500" cy="15.500" r="2" fill="#fff" stroke="none" /></I>],
    [1672, 22, <I w={22}><path d="M2 7h3l4-4v14l-4-4H2z" stroke="#fff" strokeWidth="1.300" /><path d="M12 7c2 2 2 4 0 6" stroke="#ddd" strokeWidth="1.300" /><path d="M15 5c3 3 3 7 0 10M18 3c4 4 4 10 0 14" stroke="#888" strokeWidth="1.300" /></I>],
    [1702, 22, <I w={22} h={22}><path d="M6 1l4 3-4 3-4-3zM15 1l5 3-5 3-4-3zM6 7l4 3-4 3-4-3zM15 7l5 3-5 3-4-3zM14 14l4 1-4 3z" fill="#fff" stroke="none" /><rect x="1" y="8" width="11" height="11" rx="1.500" fill="#d8102c" stroke="none" /><text x="6.500" y="17" fontSize="10" fontWeight="bold" fill="#fff" stroke="none" textAnchor="middle" fontFamily="Open Sans">2</text></I>],
    [1740, 30, <Label w={29} className="shrink-0 text-[14px] leading-5">ENG</Label>],
    [1808, 78, <div className="flex flex-col items-center text-[13.500px] leading-[23px]"><Label w={60}>04:07 PM</Label><Label w={76}>24-08-2020</Label></div>],
    [1879, 24, <I w={24} h={24}><path d="M2 3h20v16h-9l-2 3-2-3H2z" fill="#fff" stroke="none" /><path d="M5 7h14M5 11h14M5 15h7" stroke="#1f1f1f" strokeWidth="1.300" /><circle cx="18" cy="17" r="4.500" fill="#fff" stroke="#1f1f1f" /><path d="M18 12.500a4.500 4.500 0 0 1 0 9z" fill="#1f1f1f" stroke="none" /></I>],
    [1914, 1, <div className="h-[50px] w-px bg-[#777]" />],
  ];
  return (
    <div className="relative flex h-[50px] bg-[#1f1f1f] text-white">
      <div className="flex w-[60px] items-center justify-center"><svg width="20" height="20" viewBox="0 0 20 20" fill="#fff"><path d="M0 3l8.500-1.200v7.700H0zM9.500 1.600L20 0v9.500H9.500zM0 10.500h8.500v7.700L0 17zM9.500 10.500H20V20L9.500 18.400z" /></svg></div>
      <div className="flex h-[50px] w-[430px] items-center border border-[#5c5c5c] bg-[#333] pl-[13px]">
        <svg width="22" height="22" viewBox="0 0 22 22" fill="none" stroke="#ddd" strokeWidth="1.500"><circle cx="13.500" cy="8" r="6.500" /><path d="M9 12.500L1 21" /></svg>
        <Label w={163} className="mt-px ml-[14px] text-[17.500px] text-[#cfcfcf]">Type here to search</Label>
      </div>
      <Strip start={490} items={apps} />
      <Strip start={1171} items={tray} />
      <div className="absolute bottom-0 left-[991px] h-[3px] w-[51px] bg-[#e4f4a6]" />
      <div className="absolute bottom-0 left-[1053px] h-[3px] w-[51px] bg-[#e4f4a6]" />
      <div className="absolute bottom-0 left-[1110px] h-[3px] w-[61px] bg-[#e4f4a6]" />
    </div>
  );
}

export default function App() {
  return (
    <div className={"flex h-[1080px] w-[1920px] flex-col overflow-hidden bg-[#f0f0f0] text-black " + UI}>
      <TitleBar />
      <MenuBar />
      <Toolbar1 />
      <Toolbar2 />
      <div className="h-[2px] border-t border-b border-[#a0a0a0] border-b-[#696969]" />
      <div className="flex h-[701px] shrink-0">
        <Toolbox />
        <Workspace />
        <Instruments />
      </div>
      <Spreadsheet />
      <StatusBar />
      <Taskbar />
    </div>
  );
}
